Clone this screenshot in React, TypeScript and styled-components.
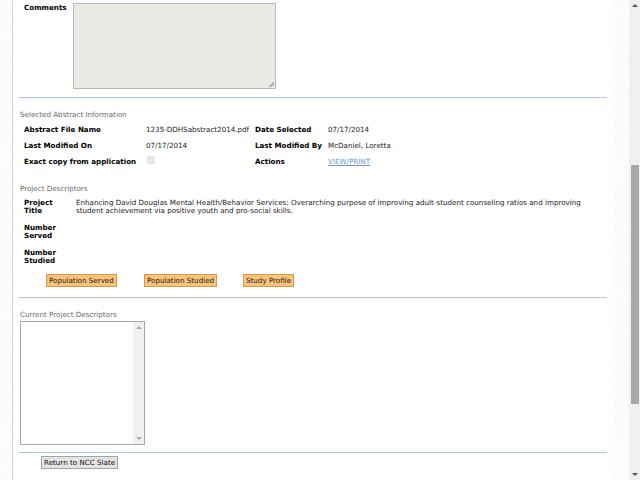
import styled, { createGlobalStyle } from 'styled-components';

const GlobalStyle = createGlobalStyle`
  html, body { margin: 0; padding: 0; background: #fff; }
  body { font-family: "DejaVu Sans", Verdana, sans-serif; font-size: 7.15px; color: #111; overflow: hidden; }
`;

const Frame = styled.div`
  display: flex;
  height: 480px;
  width: 640px;
  overflow: hidden;
`;

const Gutter = styled.div<{ w: number }>`
  width: ${(p) => p.w}px;
  flex: none;
  background: repeating-linear-gradient(135deg, #fff 0, #fff 2px, #f5f6f8 2px, #f5f6f8 3px);
`;

const Page = styled.div`
  width: 588px;
  flex: none;
  border-left: 1px solid #c6d7ee;
  border-right: 1px solid #c6d7ee;
  padding: 0 7px 0 6px;
  margin-right: -1px;
  background: #fff;
`;

const CommentsRow = styled.div`
  display: flex;
  padding: 3px 0 0 5px;
`;

const FieldLabel = styled.div<{ w?: number }>`
  font-weight: bold;
  width: ${(p) => p.w ?? 49}px;
  flex: none;
  color: #000;
`;

const Comments = styled.div`
  width: 201px;
  height: 84px;
  background: #ebeae5;
  border: 1px solid #b9b9b9;
  position: relative;
`;

const Grip = styled.span`
  position: absolute;
  right: 1px;
  bottom: 1px;
  width: 5px;
  height: 5px;
  background: linear-gradient(135deg, transparent 0 45%, #888 45% 55%, transparent 55% 70%, #888 70% 80%, transparent 80%);
`;

const Rule = styled.div<{ top: number }>`
  border-top: 1px solid #a8c7ea;
  margin-top: ${(p) => p.top}px;
`;

const Heading = styled.div<{ top: number }>`
  color: #6a6a6a;
  padding-left: 1px;
  margin-top: ${(p) => p.top}px;
  line-height: 8px;
  height: 8px;
`;

const InfoGrid = styled.div`
  display: grid;
  grid-template-columns: 122px 109px 73px 1fr;
  grid-auto-rows: 16px;
  align-items: center;
  padding-left: 5px;
  margin-top: 2px;
`;

const Value = styled.div`
  color: #222;
`;

const Link = styled.a`
  color: #6b9ad3;
  text-decoration: underline;
`;

const Check = styled.input`
  width: 8px;
  height: 8px;
  margin: 0 0 0 1px;
  opacity: 0.6;
`;

const DescGrid = styled.div`
  display: grid;
  grid-template-columns: 52px 1fr;
  row-gap: 8px;
  padding-left: 5px;
  margin-top: 6px;
  line-height: 8.4px;
`;

const DescRow = styled.div`
  display: contents;
`;

const DescCell = styled.div`
  min-height: 17px;
  color: #222;
  padding-right: 10px;
`;

const ButtonRow = styled.div`
  display: grid;
  grid-template-columns: 98px 99px auto;
  padding-left: 27px;
  margin-top: 8px;
`;

const OrangeButton = styled.button`
  justify-self: start;
  font: inherit;
  color: #222;
  height: 13px;
  padding: 0 2px;
  background: #fbc27a;
  border: 1px solid #d49a45;
  line-height: 10px;
  cursor: pointer;
`;

const ListBox = styled.div`
  display: flex;
  justify-content: flex-end;
  margin: 2px 0 0 1px;
  width: 123px;
  height: 122px;
  border: 1px solid #a9a9a9;
  background: #fff;
`;

const InnerScroll = styled.div`
  width: 11px;
  background: #f0f0f0;
  display: flex;
  flex-direction: column;
  justify-content: space-between;
  align-items: center;
  padding: 4px 0;
`;

const Arrow = styled.span<{ down?: boolean; c?: string }>`
  width: 0;
  height: 0;
  border-left: 3px solid transparent;
  border-right: 3px solid transparent;
  ${(p) => (p.down ? `border-top: 3px solid ${p.c ?? '#a8a8a8'};` : `border-bottom: 3px solid ${p.c ?? '#a8a8a8'};`)}
`;

const GrayButton = styled.button`
  font: inherit;
  color: #111;
  margin: 3px 0 0 22px;
  height: 13px;
  padding: 0 2px;
  background: #e4e4e4;
  border: 1px solid #a4a4a4;
  line-height: 10px;
`;

const Scrollbar = styled.div`
  width: 11px;
  flex: none;
  background: #f0f0f0;
  display: flex;
  flex-direction: column;
  align-items: center;
  padding: 4px 0;
  box-sizing: border-box;
`;

const Thumb = styled.div`
  width: 8px;
  margin-top: 158px;
  height: 239px;
  background: #a8a8a8;
`;

const Spacer = styled.div`
  flex: 1;
`;

const descriptors = [
  {
    label: 'Project Title',
    value:
      'Enhancing David Douglas Mental Health/Behavior Services: Overarching purpose of improving adult-student counseling ratios and improving student achievement via positive youth and pro-social skills.',
  },
  { label: 'Number Served', value: '' },
  { label: 'Number Studied', value: '' },
];

export default function App() {
  return (
    <Frame>
      <GlobalStyle />
      <Gutter w={12} />
      <Page>
        <CommentsRow>
          <FieldLabel>Comments</FieldLabel>
          <Comments>
            <Grip />
          </Comments>
        </CommentsRow>
        <Rule top={8} />

        <Heading top={13}>Selected Abstract Information</Heading>
        <InfoGrid>
          <FieldLabel w={122}>Abstract File Name</FieldLabel>
          <Value>1235-DDHSabstract2014.pdf</Value>
          <FieldLabel w={73}>Date Selected</FieldLabel>
          <Value>07/17/2014</Value>

          <FieldLabel w={122}>Last Modified On</FieldLabel>
          <Value>07/17/2014</Value>
          <FieldLabel w={73}>Last Modified By</FieldLabel>
          <Value>McDaniel, Loretta</Value>

          <FieldLabel w={122}>Exact copy from application</FieldLabel>
          <Value>
            <Check type="checkbox" checked disabled readOnly />
          </Value>
          <FieldLabel w={73}>Actions</FieldLabel>
          <Value>
            <Link href="#">VIEW/PRINT</Link>
          </Value>
        </InfoGrid>

        <Heading top={16}>Project Descriptors</Heading>
        <DescGrid>
          {descriptors.map((d) => (
            <DescRow key={d.label}>
              <FieldLabel w={38}>{d.label}</FieldLabel>
              <DescCell>{d.value}</DescCell>
            </DescRow>
          ))}
        </DescGrid>
        <ButtonRow>
          <OrangeButton>Population Served</OrangeButton>
          <OrangeButton>Population Studied</OrangeButton>
          <OrangeButton>Study Profile</OrangeButton>
        </ButtonRow>
        <Rule top={10} />

        <Heading top={13}>Current Project Descriptors</Heading>
        <ListBox>
          <InnerScroll>
            <Arrow />
            <Arrow down />
          </InnerScroll>
        </ListBox>
        <Rule top={7} />
        <GrayButton>Return to NCC Slate</GrayButton>
      </Page>
      <Gutter w={15} />
      <Scrollbar>
        <Arrow c="#505050" />
        <Thumb />
        <Spacer />
        <Arrow down c="#505050" />
      </Scrollbar>
    </Frame>
  );
}
